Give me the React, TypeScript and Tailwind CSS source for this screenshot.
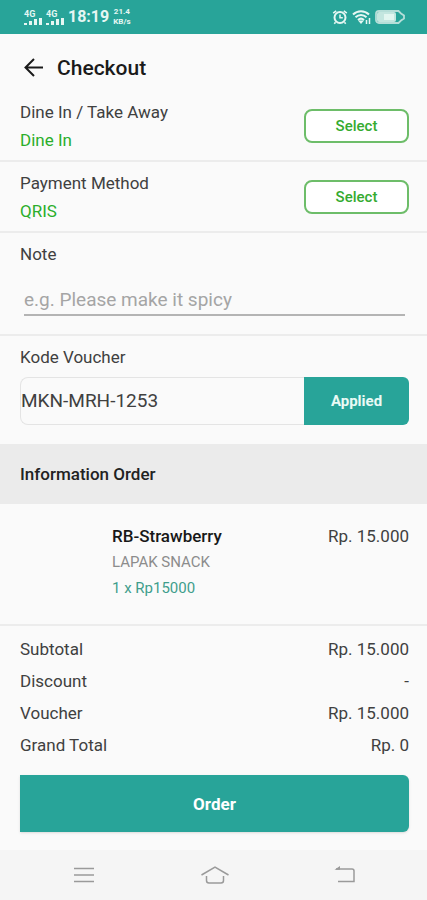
import React from 'react';

interface ChoiceRowProps {
  label: string;
  value: string;
}

const totals = [
  { label: 'Subtotal', amount: 'Rp. 15.000' },
  { label: 'Discount', amount: '-' },
  { label: 'Voucher', amount: 'Rp. 15.000' },
  { label: 'Grand Total', amount: 'Rp. 0' },
];

const Signal: React.FC = () => (
  <div className="flex w-[18px] flex-col">
    <span className="text-[9px] leading-[8px] font-bold">4G</span>
    <svg className="h-[7px] w-[18px]" viewBox="0 0 18 7" fill="currentColor" aria-hidden="true">
      <rect x="0" y="5" width="3" height="2" />
      <rect x="5" y="3" width="3" height="4" />
      <rect x="10" y="1" width="3" height="6" />
      <rect x="15" y="0" width="3" height="7" />
    </svg>
  </div>
);

const StatusBar: React.FC = () => (
  <div className="flex h-[34px] items-center justify-between bg-[#28a499] pr-[22px] pl-6 text-[#e6f7f3]">
    <div className="flex items-center gap-1">
      <Signal />
      <Signal />
      <span className="text-[16px] leading-5 font-bold">18:19</span>
      <div className="flex flex-col items-center text-[8px] leading-[10px] font-bold">
        <span>21.4</span>
        <span>KB/s</span>
      </div>
    </div>
    <div className="flex items-center gap-1">
      {/* Alarm */}
      <svg className="h-4 w-4" viewBox="0 0 16 16" fill="none" stroke="currentColor" strokeWidth="2" aria-hidden="true">
        <circle cx="8" cy="8.5" r="5.5" />
        <path d="M8 5.5v3.2h2.8" strokeWidth="1.5" />
        <path d="M1.2 4.2 4.2 1.8M14.8 4.2 11.8 1.8M3.5 13.3 2.3 14.8M12.5 13.3l1.2 1.5" strokeWidth="1.6" />
      </svg>
      {/* Wifi */}
      <svg className="h-4 w-[19px]" viewBox="0 0 19 16" fill="none" stroke="currentColor" strokeWidth="2" aria-hidden="true">
        <path d="M1 5.500C5.500 1 12.500 1 17 5.500" />
        <path d="M3.500 8.300c3.200-3 7.800-3 11 0" />
        <path d="M6 11c2-1.800 4-1.800 6 0" />
        <path d="M6 11.500 9 15l3-3.500Z" fill="currentColor" stroke="none" />
        <path d="M14.500 11v4M17.500 9v6" strokeWidth="1.500" />
      </svg>
      {/* Battery */}
      <svg className="h-[14px] w-[30px]" viewBox="0 0 30 14" aria-hidden="true">
        <path d="M4 1h19.500l2.500 2.500 3 2v3l-3 2-2.500 2.500H4a3 3 0 0 1-3-3V4a3 3 0 0 1 3-3Z" fill="none" stroke="#b5ded8" strokeWidth="1.800" />
        <rect x="2" y="2" width="19" height="10" rx="2" fill="#c3e6df" />
        <rect x="9" y="4" width="10" height="6" fill="#e2f6f0" />
      </svg>
    </div>
  </div>
);

const ChoiceRow: React.FC<ChoiceRowProps> = ({ label, value }) => (
  <div className="flex items-center justify-between border-b-2 border-[#ececec] pt-[9px] pr-[18px] pb-2 pl-5">
    <div className="flex flex-col gap-1">
      <p>{label}</p>
      <p className="text-[#2bae2b]">{value}</p>
    </div>
    <button
      type="button"
      aria-label={`Select ${label}`}
      className="h-[34px] w-[105px] rounded-lg border-2 border-[#6dbd69] bg-white text-[15px] font-medium text-[#35ab30]"
    >
      Select
    </button>
  </div>
);

export default function App() {
  return (
    <div className="flex min-h-screen flex-col bg-[#fafafa] font-[Roboto,sans-serif] text-[17px] leading-6 text-[#404040]">
      <StatusBar />

      <header className="flex h-[57px] items-center gap-[13px] px-6 pt-[10px] text-[#1a1a1a]">
        <button type="button" aria-label="Back">
          <svg className="h-5 w-5" viewBox="0 0 20 20" fill="none" stroke="currentColor" strokeWidth="2" aria-hidden="true">
            <path d="M19 9.500H2M10 1 1.500 9.500l8.500 8.500" />
          </svg>
        </button>
        <h1 className="text-[21px] leading-7 font-medium">Checkout</h1>
      </header>

      <main className="flex flex-1 flex-col">
        <ChoiceRow label="Dine In / Take Away" value="Dine In" />
        <ChoiceRow label="Payment Method" value="QRIS" />

        {/* Note */}
        <div className="flex flex-col border-b-2 border-[#ececec] pt-[9px] pr-[18px] pb-[18px] pl-5">
          <label htmlFor="note">Note</label>
          <input
            id="note"
            type="text"
            placeholder="e.g. Please make it spicy"
            className="mx-1 mt-[18px] h-8 border-b-2 border-[#b4b4b4] text-[19px] outline-none placeholder:text-[#a5a5a5]"
          />
        </div>

        {/* Voucher */}
        <div className="flex flex-col pt-[9px] pr-[18px] pb-[19px] pl-5">
          <label htmlFor="voucher">Kode Voucher</label>
          <div className="mt-2 flex h-12">
            <input
              id="voucher"
              type="text"
              defaultValue="MKN-MRH-1253"
              className="min-w-0 flex-1 rounded-l-lg border border-r-0 border-[#e4e4e4] text-[19px] outline-none"
            />
            <button type="button" className="w-[105px] rounded-r-md bg-[#28a499] text-[15px] font-bold text-[#e9faf5]">
              Applied
            </button>
          </div>
        </div>

        <h2 className="flex h-[60px] items-center bg-[#ebebeb] px-5 font-medium text-[#222222]">Information Order</h2>

        {/* Ordered item */}
        <div className="flex justify-between border-b-2 border-[#ececec] pt-[19px] pr-[18px] pb-[23px] pl-28 leading-[26px]">
          <div>
            <p className="font-medium text-[#181818]">RB-Strawberry</p>
            <p className="text-[15px] leading-[26px] text-[#8c8c8c]">LAPAK SNACK</p>
            <p className="text-[15px] leading-[26px] text-[#3f9e8c]">1 x Rp15000</p>
          </div>
          <p>Rp. 15.000</p>
        </div>

        <dl className="pt-[7px] pr-[18px] pl-5 leading-8">
          {totals.map((row) => (
            <div key={row.label} className="flex justify-between">
              <dt>{row.label}</dt>
              <dd>{row.amount}</dd>
            </div>
          ))}
        </dl>

        <div className="pt-[14px] pr-[18px] pb-[18px] pl-5">
          <button type="button" className="h-[57px] w-full rounded-r-md bg-[#28a499] font-bold text-white shadow">
            Order
          </button>
        </div>
      </main>

      {/* System navigation */}
      <nav className="flex h-[50px] items-center justify-between bg-[#f5f5f5] pr-[68px] pl-[70px] text-[#9a9a9a]">
        <button type="button" aria-label="Recent apps">
          <svg className="h-7 w-7" viewBox="0 0 28 28" fill="none" stroke="currentColor" strokeWidth="1.500" aria-hidden="true">
            <path d="M4 7.500h20M4 14h20M4 20.500h20" />
          </svg>
        </button>
        <button type="button" aria-label="Home">
          <svg className="h-7 w-7" viewBox="0 0 28 28" fill="none" stroke="currentColor" strokeWidth="1.500" aria-hidden="true">
            <path d="M.5 14 14 6l13.500 8" />
            <path d="M5.500 15v4.500a2.500 2.500 0 0 0 2.500 2.500h12a2.500 2.500 0 0 0 2.500-2.500V15" />
          </svg>
        </button>
        <button type="button" aria-label="Back to previous screen">
          <svg className="h-7 w-7" viewBox="0 0 28 28" fill="none" stroke="currentColor" strokeWidth="1.500" aria-hidden="true">
            <path d="M5 8h16a2 2 0 0 1 2 2v10.500H7" />
            <path d="M3.500 8.800 9 5v3.800Z" fill="currentColor" stroke="none" />
          </svg>
        </button>
      </nav>
    </div>
  );
}
